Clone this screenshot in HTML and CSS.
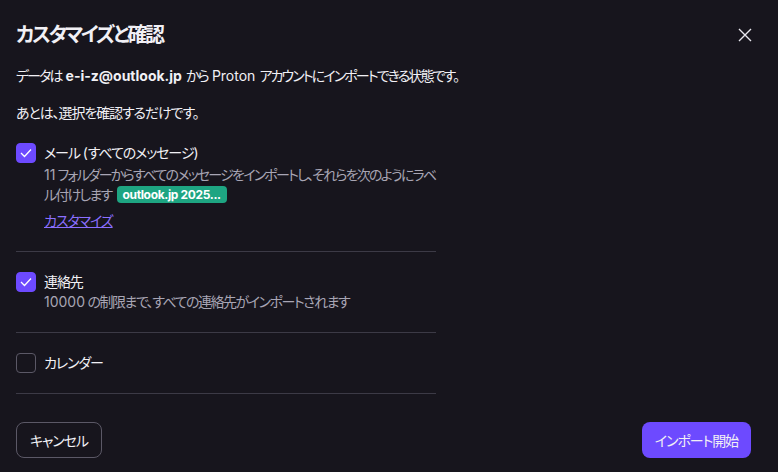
FILE: index.html
```html
<!DOCTYPE html>
<html lang="ja">
<head>
    <meta charset="UTF-8">
    <meta name="viewport" content="width=device-width, initial-scale=1.0">
    <title>カスタマイズと確認</title>
    <link rel="stylesheet" href="styles.css">
</head>
<body>
    <div class="modal">
        <div class="modal-header">
            <h1>カスタマイズと確認</h1>
            <button class="close" aria-label="閉じる">
                <svg width="14" height="14" viewBox="0 0 14 14">
                    <path d="M1 1 L13 13 M13 1 L1 13" stroke="#e8e7ee" stroke-width="1.4" fill="none"/>
                </svg>
            </button>
        </div>

        <p class="intro first">データは <b class="en">e-i-z@outlook.jp</b> から <span class="en">Proton</span> アカウントにインポートできる状態です。</p>
        <p class="intro second">あとは、選択を確認するだけです。</p>

        <div class="items">
            <div class="item">
                <span class="check checked">
                    <svg width="12" height="10" viewBox="0 0 12 10"><path d="M1 5 L4.5 8.5 L11 1.5" stroke="#fff" stroke-width="1.3" fill="none"/></svg>
                </span>
                <div class="item-body">
                    <div class="item-title">メール <span class="en">(</span>すべてのメッセージ<span class="en">)</span></div>
                    <div class="item-desc wrap"><span class="en">11</span> フォルダーからすべてのメッセージをインポートし、それらを次のようにラベル付けします <span class="badge">outlook.jp 2025...</span></div>
                    <a href="#" class="link">カスタマイズ</a>
                </div>
            </div>
            <div class="item">
                <span class="check checked">
                    <svg width="12" height="10" viewBox="0 0 12 10"><path d="M1 5 L4.5 8.5 L11 1.5" stroke="#fff" stroke-width="1.3" fill="none"/></svg>
                </span>
                <div class="item-body">
                    <div class="item-title">連絡先</div>
                    <div class="item-desc"><span class="en">10000</span> の制限まで、すべての連絡先がインポートされます</div>
                </div>
            </div>
            <div class="item">
                <span class="check"></span>
                <div class="item-body">
                    <div class="item-title">カレンダー</div>
                </div>
            </div>
        </div>

        <div class="modal-footer">
            <button class="btn btn-cancel">キャンセル</button>
            <button class="btn btn-primary">インポート開始</button>
        </div>
    </div>
</body>
</html>
```

FILE: styles.css
```css
body {
    margin: 0;
    background-color: #17151d;
    color: #f1f0f5;
    font-family: Inter, "Noto Sans CJK JP", sans-serif;
    font-size: 14px;
    font-feature-settings: "palt";
    letter-spacing: -1.1px;
}
.en {
    letter-spacing: 0;
}
.modal {
    padding: 0 27px 0 16px;
}
.modal-header {
    display: flex;
    justify-content: space-between;
    align-items: center;
    padding-top: 23px;
}
h1 {
    margin: 0;
    font-size: 20px;
    line-height: 24px;
    font-weight: 700;
    letter-spacing: -2.3px;
}
.close {
    background: none;
    border: none;
    padding: 0;
    width: 14px;
    height: 14px;
    margin-right: -1px;
    cursor: pointer;
}
.intro {
    margin: 19px 0 0;
    line-height: 20px;
}
.intro.first {
    letter-spacing: -1.9px;
}
.intro b {
    font-weight: 700;
}
.intro .en {
    letter-spacing: 0;
    margin: 0 2px;
}
.intro.second {
    margin-top: 17px;
}
.items {
    width: 420px;
    margin-top: 20px;
}
.item {
    display: flex;
    gap: 8px;
    padding: 20px 0;
    border-bottom: 1px solid #3c3a46;
}
.item:first-child {
    padding-top: 0;
}
.check {
    flex: none;
    width: 18px;
    height: 18px;
    border: 1px solid #5b5866;
    border-radius: 4px;
    display: flex;
    align-items: center;
    justify-content: center;
}
.check.checked {
    background-color: #6d4aff;
    border-color: #6d4aff;
}
.item-body {
    flex: 1;
}
.item-title {
    line-height: 20px;
}
.item-desc {
    line-height: 20px;
    color: #a8a5b4;
    letter-spacing: -1.5px;
}
.item-desc .en {
    letter-spacing: 0;
}
.item-desc.wrap {
    margin-top: 2px;
    letter-spacing: -1.8px;
}
.badge {
    display: inline-block;
    background-color: #1ea582;
    color: #fff;
    font-size: 12px;
    font-weight: 700;
    line-height: 17px;
    letter-spacing: -0.35px;
    padding: 0 6px;
    border-radius: 4px;
    margin-left: 3px;
    vertical-align: 1px;
}
.link {
    display: inline-block;
    margin-top: 6px;
    line-height: 20px;
    color: #8b6fff;
}
.modal-footer {
    display: flex;
    justify-content: space-between;
    margin-top: 28px;
}
.btn {
    font-family: inherit;
    font-size: 14px;
    font-feature-settings: "palt";
    letter-spacing: -1.1px;
    height: 36px;
    border-radius: 8px;
    cursor: pointer;
    color: #f1f0f5;
}
.btn-cancel {
    background: none;
    border: 1px solid #5b5866;
    padding: 0 13px;
}
.btn-primary {
    background-color: #6d4aff;
    border: none;
    padding: 0 13px;
}
```
